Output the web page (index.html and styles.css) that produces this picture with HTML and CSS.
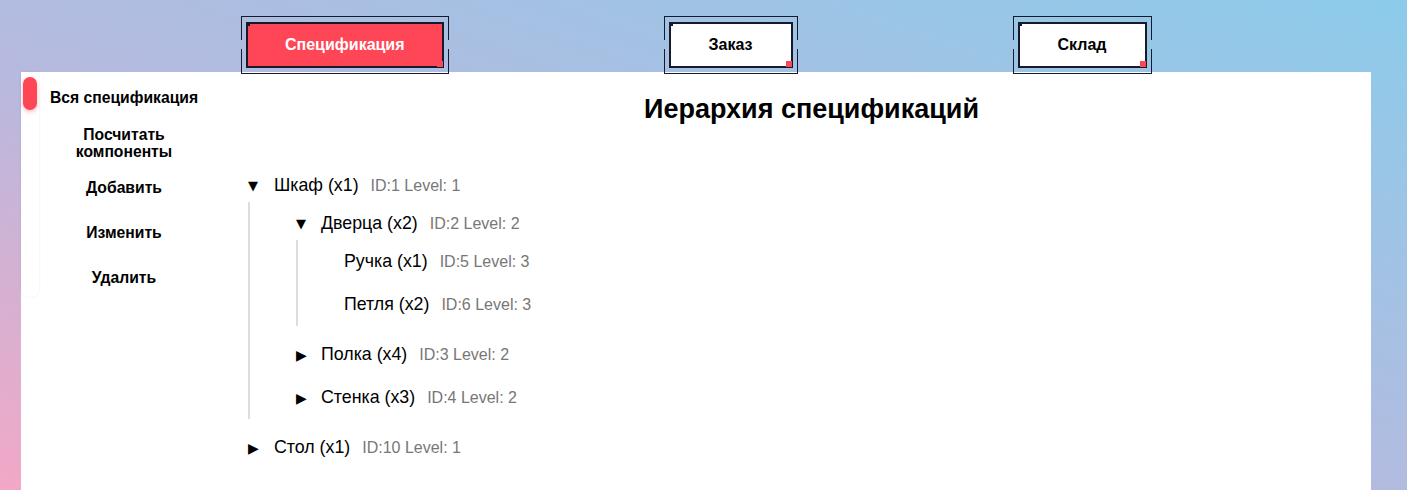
FILE: index.html
```html
<!DOCTYPE html>
<html lang="ru">
<head>
<meta charset="utf-8">
<title>Иерархия спецификаций</title>
<link rel="stylesheet" href="styles.css">
</head>
<body>
<header class="tabs">
  <div class="tab-frame"><button class="tab tab-active">Спецификация</button></div>
  <div class="tab-frame"><button class="tab">Заказ</button></div>
  <div class="tab-frame"><button class="tab">Склад</button></div>
</header>
<main class="panel">
  <aside class="sidebar">
    <div class="track"><div class="pill"></div></div>
    <nav class="nav">
      <div class="nav-item">Вся спецификация</div>
      <div class="nav-item">Посчитать компоненты</div>
      <div class="nav-item">Добавить</div>
      <div class="nav-item">Изменить</div>
      <div class="nav-item">Удалить</div>
    </nav>
  </aside>
  <section class="content">
    <h1 class="title">Иерархия спецификаций</h1>
    <div class="tree">
      <div class="node">
        <div class="row"><span class="toggle">▼</span><span class="name">Шкаф (x1)</span><span class="meta">ID:1 Level: 1</span></div>
        <div class="children">
          <div class="node">
            <div class="row"><span class="toggle">▼</span><span class="name">Дверца (x2)</span><span class="meta">ID:2 Level: 2</span></div>
            <div class="children">
              <div class="node"><div class="row"><span class="name">Ручка (x1)</span><span class="meta">ID:5 Level: 3</span></div></div>
              <div class="node"><div class="row"><span class="name">Петля (x2)</span><span class="meta">ID:6 Level: 3</span></div></div>
            </div>
          </div>
          <div class="node"><div class="row"><span class="toggle small">▶</span><span class="name">Полка (x4)</span><span class="meta">ID:3 Level: 2</span></div></div>
          <div class="node"><div class="row"><span class="toggle small">▶</span><span class="name">Стенка (x3)</span><span class="meta">ID:4 Level: 2</span></div></div>
        </div>
      </div>
      <div class="node"><div class="row"><span class="toggle small">▶</span><span class="name">Стол (x1)</span><span class="meta">ID:10 Level: 1</span></div></div>
    </div>
  </section>
</main>
</body>
</html>
```
FILE: styles.css
```css
* { box-sizing: border-box; }
html, body { margin: 0; height: 100%; }
body {
  font-family: "Liberation Sans", Arial, sans-serif;
  color: #000;
  background: linear-gradient(to top right, #f2a8c6 0%, #b8b9de 42%, #8ccbea 100%);
  overflow: hidden;
}
.tabs {
  display: flex;
  gap: 215px;
  padding: 16px 0 0 241px;
  height: 72px;
  position: relative;
  z-index: 2;
}
.tab-frame {
  height: 58px;
  flex-shrink: 0;
  padding: 5px;
  border-top: 1px solid #171a2b;
  border-bottom: 1px solid #171a2b;
  background:
    linear-gradient(#171a2b, #171a2b) left top / 1px 23px no-repeat,
    linear-gradient(#171a2b, #171a2b) left bottom / 1px 24px no-repeat,
    linear-gradient(#171a2b, #171a2b) right top / 1px 23px no-repeat,
    linear-gradient(#171a2b, #171a2b) right bottom / 1px 24px no-repeat;
}
.tab {
  position: relative;
  height: 46px;
  padding: 0 38px;
  border: 2px solid #171a2b;
  background: #fff;
  color: #000;
  font-family: "Liberation Sans", Arial, sans-serif;
  font-weight: bold;
  font-size: 16px;
  cursor: pointer;
}
.tab-active { background: #ff4656; color: #fff; padding: 0 37px; }
.tab::before {
  content: "";
  position: absolute;
  top: -2px;
  left: -2px;
  width: 4px;
  height: 4px;
  background: #171a2b;
}
.tab::after {
  content: "";
  position: absolute;
  right: -1px;
  bottom: -1px;
  width: 6px;
  height: 6px;
  background: #ff4656;
}
.panel {
  margin: 0 36px 0 21px;
  background: #fff;
  min-height: 418px;
  display: flex;
  align-items: flex-start;
}
.sidebar {
  display: flex;
  width: 188px;
  flex-shrink: 0;
}
.track {
  width: 18px;
  border-radius: 0 0 8px 8px;
  box-shadow: 0 0 3px rgba(0, 0, 0, 0.07);
  padding: 5px 2px 0;
  margin-bottom: 3px;
}
.pill {
  width: 14px;
  height: 33px;
  border-radius: 7px;
  background: #ff4656;
  box-shadow: 0 2px 4px rgba(255, 70, 86, 0.35);
}
.nav {
  width: 170px;
  padding: 3px 0 0;
}
.nav-item {
  height: 45px;
  display: flex;
  align-items: center;
  justify-content: center;
  text-align: center;
  font-weight: bold;
  font-size: 15.7px;
  line-height: 17px;
  cursor: pointer;
}
.content {
  flex: 1;
  padding: 0 20px 0 39px;
}
.title {
  margin: 22px 0 0;
  padding-left: 24px;
  text-align: center;
  font-size: 27px;
  line-height: 30px;
  font-weight: bold;
}
.tree { margin-top: 40px; }
.row {
  height: 43px;
  display: flex;
  align-items: center;
}
.toggle {
  width: 26px;
  flex-shrink: 0;
  font-size: 13px;
  line-height: 1;
  font-family: "DejaVu Sans", sans-serif;
}
.toggle.small { font-size: 14px; }
.children .toggle { width: 25px; }
.name { font-size: 17.8px; }
.meta {
  font-size: 16px;
  color: #777;
  margin-left: 12px;
}
.children {
  margin: -5px 0 7px 0;
  border-left: 2px solid #ddd;
  padding-left: 46px;
}
```
